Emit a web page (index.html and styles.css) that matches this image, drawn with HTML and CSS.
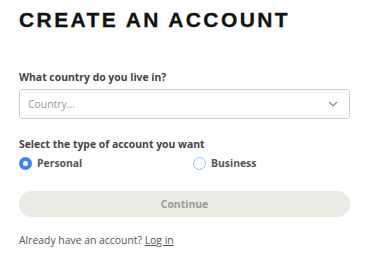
FILE: index.html
```html
<!DOCTYPE html>
<html lang="en">
<head>
    <meta charset="UTF-8">
    <title>Create an account</title>
    <link rel="stylesheet" href="styles.css">
</head>
<body>
    <div class="signup">
        <h1>Create an account</h1>

        <div class="field">
            <label class="label" for="country">What country do you live in?</label>
            <div class="select">
                <span class="placeholder">Country...</span>
                <svg class="chevron" width="10" height="6" viewBox="0 0 10 6">
                    <path d="M1 1l4 4 4-4" fill="none" stroke="#888" stroke-width="1.1"/>
                </svg>
            </div>
        </div>

        <div class="field">
            <div class="label">Select the type of account you want</div>
            <div class="radios">
                <div class="radio checked"><span class="dot"></span>Personal</div>
                <div class="radio"><span class="dot"></span>Business</div>
            </div>
        </div>

        <button class="continue">Continue</button>

        <p class="login">Already have an account? <a href="#">Log in</a></p>
    </div>
</body>
</html>
```

FILE: styles.css
```css
body {
    margin: 0;
    font-family: "Open Sans", sans-serif;
    background: #ffffff;
    color: #444444;
}
.signup {
    padding: 8px 21px 0 19px;
}
h1 {
    margin: 0 0 38px 0;
    font-family: "Liberation Sans", Arial, sans-serif;
    font-size: 21px;
    font-weight: bold;
    letter-spacing: 2.4px;
    text-transform: uppercase;
    color: #111111;
    -webkit-text-stroke: 0.3px #111111;
}
.field {
    margin-bottom: 18px;
}
.label {
    display: block;
    font-size: 10.4px;
    font-weight: 700;
    color: #444444;
    margin-bottom: 5px;
}
.field .select {
    margin-top: 3px;
}
.select {
    display: flex;
    align-items: center;
    justify-content: space-between;
    height: 28px;
    padding: 0 11px 0 8px;
    border: 1px solid #cccccc;
    border-radius: 3px;
}
.placeholder {
    font-size: 10.4px;
    color: #999999;
}
.radios {
    display: grid;
    grid-template-columns: 1fr 1fr;
    column-gap: 17px;
}
.radio {
    display: flex;
    align-items: center;
    gap: 5px;
    font-size: 10.4px;
    font-weight: 700;
    color: #555555;
}
.dot {
    width: 11px;
    height: 11px;
    border: 1px solid #94c0f5;
    border-radius: 50%;
    box-sizing: content-box;
}
.radio.checked .dot {
    width: 5px;
    height: 5px;
    border: 4px solid #3d86f0;
    background: #ffffff;
}
.continue {
    display: block;
    width: 100%;
    height: 26px;
    margin-top: 21px;
    border: none;
    border-radius: 13px;
    background: #ebebe6;
    color: #999999;
    font-family: "Open Sans", sans-serif;
    font-size: 10.4px;
    font-weight: 700;
}
.login {
    margin: 16px 0 0 0;
    font-size: 10.4px;
    color: #555555;
}
.login a {
    color: #555555;
}
```
